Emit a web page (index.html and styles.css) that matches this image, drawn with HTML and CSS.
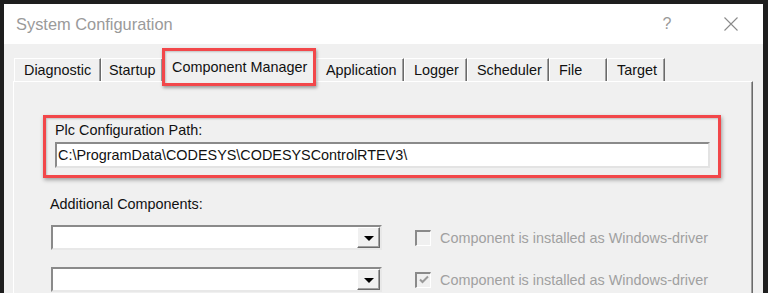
FILE: index.html
```html
<!DOCTYPE html>
<html lang="en">
<head>
    <meta charset="UTF-8">
    <meta name="viewport" content="width=device-width, initial-scale=1.0">
    <title>System Configuration</title>
    <link rel="stylesheet" href="styles.css">
</head>
<body>

    <div class="window">
        <div class="titlebar">
            <span class="title">System Configuration</span>
            <span class="help">?</span>
            <svg class="close" width="14" height="14" viewBox="0 0 14 14">
                <path d="M0.5 0.5 L13.5 13.5 M13.5 0.5 L0.5 13.5" stroke="#8a8a8a" stroke-width="1.1" fill="none"/>
            </svg>
        </div>

        <div class="tabs">
            <div class="tab tab-diagnostic">Diagnostic</div>
            <div class="tab tab-startup">Startup</div>
            <div class="tab selected">Component Manager</div>
            <div class="tab tab-application">Application</div>
            <div class="tab tab-logger">Logger</div>
            <div class="tab tab-scheduler">Scheduler</div>
            <div class="tab tab-file">File</div>
            <div class="tab tab-target">Target</div>
        </div>

        <div class="panel">
            <div class="group">
                <label class="field-label" for="plcPath">Plc Configuration Path:</label>
                <div class="textbox" id="plcPath">C:\ProgramData\CODESYS\CODESYSControlRTEV3\</div>
            </div>

            <div class="section-label">Additional Components:</div>

            <div class="row">
                <div class="combo"><span class="combo-btn"><span class="arrow"></span></span></div>
                <div class="check">
                    <span class="box"></span>
                    <span>Component is installed as Windows-driver</span>
                </div>
            </div>

            <div class="row">
                <div class="combo"><span class="combo-btn"><span class="arrow"></span></span></div>
                <div class="check">
                    <span class="box">
                        <svg width="12" height="12" viewBox="0 0 12 12">
                            <path d="M2 5.5 L4.5 8 L10 2.5" stroke="#9a9a9a" stroke-width="2" fill="none"/>
                        </svg>
                    </span>
                    <span>Component is installed as Windows-driver</span>
                </div>
            </div>
        </div>
    </div>

</body>
</html>
```

FILE: styles.css
```css
html, body { height: 100%; }
body {
    margin: 0; padding: 4px 5px 0 4px; box-sizing: border-box;
    background: #1e1e1e; overflow: hidden;
    font-family: "Liberation Sans", Arial, sans-serif; font-size: 14.4px; color: #111;
}
.window { height: 100%; background: #f0f0f0; display: flex; flex-direction: column; }

/* title bar */
.titlebar {
    height: 40px; flex: none; background: #fff;
    display: flex; align-items: center; padding-left: 12px;
}
.title { flex: 1; font-size: 16.4px; color: #9a9a9a; }
.help { width: 20px; text-align: center; color: #9a9a9a; font-size: 16px; }
.close { margin: 0 25px 0 47px; }

/* tabs */
.tabs {
    display: flex; align-items: flex-end;
    padding: 7px 0 0 10px; height: 30px; flex: none;
}
.tab {
    height: 23px; box-sizing: border-box;
    border-top: 1px solid #fff; border-left: 1px solid #fff;
    border-right: 1px solid #6a6a6a;
    box-shadow: inset -1px 0 #a0a0a0;
    padding: 3px 7px 0 9px; line-height: 17px; white-space: nowrap;
}
.tab-diagnostic { padding-left: 9px; width: 87px; }
.tab-startup { width: 62px; padding-left: 7px; }
.tab-application { width: 88px; }
.tab-logger { width: 63px; }
.tab-scheduler { width: 82px; }
.tab-file { width: 58px; }
.tab-target { width: 58px; }
.tab.selected {
    position: relative; z-index: 2;
    height: 32px; width: 148px; margin: 0 3px -2px 2px;
    border: none; box-shadow: none; background: #f0f0f0;
    padding: 8px 0 0 7px;
}
.tab.selected::after {
    content: ""; position: absolute; inset: -3px;
    border: 3px solid #f2474a;
    box-shadow: 1px 2px 3px rgba(0, 0, 0, 0.35), inset 1px 1px 2px rgba(0, 0, 0, 0.2);
}

/* panel */
.panel {
    flex: 1; margin: 0 10px 0 9px;
    border-top: 1px solid #fff; border-left: 1px solid #fff;
    border-right: 1px solid #6a6a6a; box-shadow: inset -1px 0 #a0a0a0;
}
.group {
    margin: 33px 0 0 29px; width: 678px; box-sizing: border-box;
    border: 3px solid #f2474a; padding: 4px 0 7px 9px;
    box-shadow: 1px 2px 4px rgba(0, 0, 0, 0.35), inset 1px 1px 2px rgba(0, 0, 0, 0.2);
}
.field-label { display: block; line-height: 17px; }
.textbox {
    margin-top: 3px; width: 655px; height: 26px; box-sizing: border-box;
    background: #fff; padding-left: 1px; line-height: 22px;
    border-top: 2px solid #8a8a8a; border-left: 2px solid #8a8a8a;
    border-bottom: 2px solid #e3e3e3; border-right: 2px solid #e3e3e3;
}
.section-label { margin: 18px 0 0 36px; line-height: 17px; }

.row { display: flex; align-items: center; margin: 12px 0 0 37px; }
.row + .row { margin-top: 17px; }
.combo {
    width: 331px; height: 25px; box-sizing: border-box; background: #fff;
    border-top: 2px solid #8a8a8a; border-left: 2px solid #8a8a8a;
    border-bottom: 2px solid #e8e8e8; border-right: 2px solid #e8e8e8;
    display: flex; justify-content: flex-end;
}
.combo-btn {
    width: 23px; height: 21px; box-sizing: border-box; background: #f0f0f0;
    border-top: 1px solid #fff; border-left: 1px solid #fff;
    border-bottom: 1px solid #6a6a6a; border-right: 1px solid #6a6a6a;
    box-shadow: inset -1px -1px #a0a0a0;
    display: flex; align-items: center; justify-content: center;
}
.arrow {
    width: 0; height: 0; margin-top: 1px;
    border-top: 5px solid #000; border-left: 5px solid transparent; border-right: 5px solid transparent;
}
.check { display: flex; align-items: center; margin-left: 33px; color: #a0a0a0; }
.box {
    width: 16px; height: 16px; box-sizing: border-box; margin-right: 9px;
    border-top: 2px solid #8a8a8a; border-left: 2px solid #8a8a8a;
    border-bottom: 1px solid #fff; border-right: 1px solid #fff;
    background: #f0f0f0; display: flex; align-items: center; justify-content: center;
}
```
